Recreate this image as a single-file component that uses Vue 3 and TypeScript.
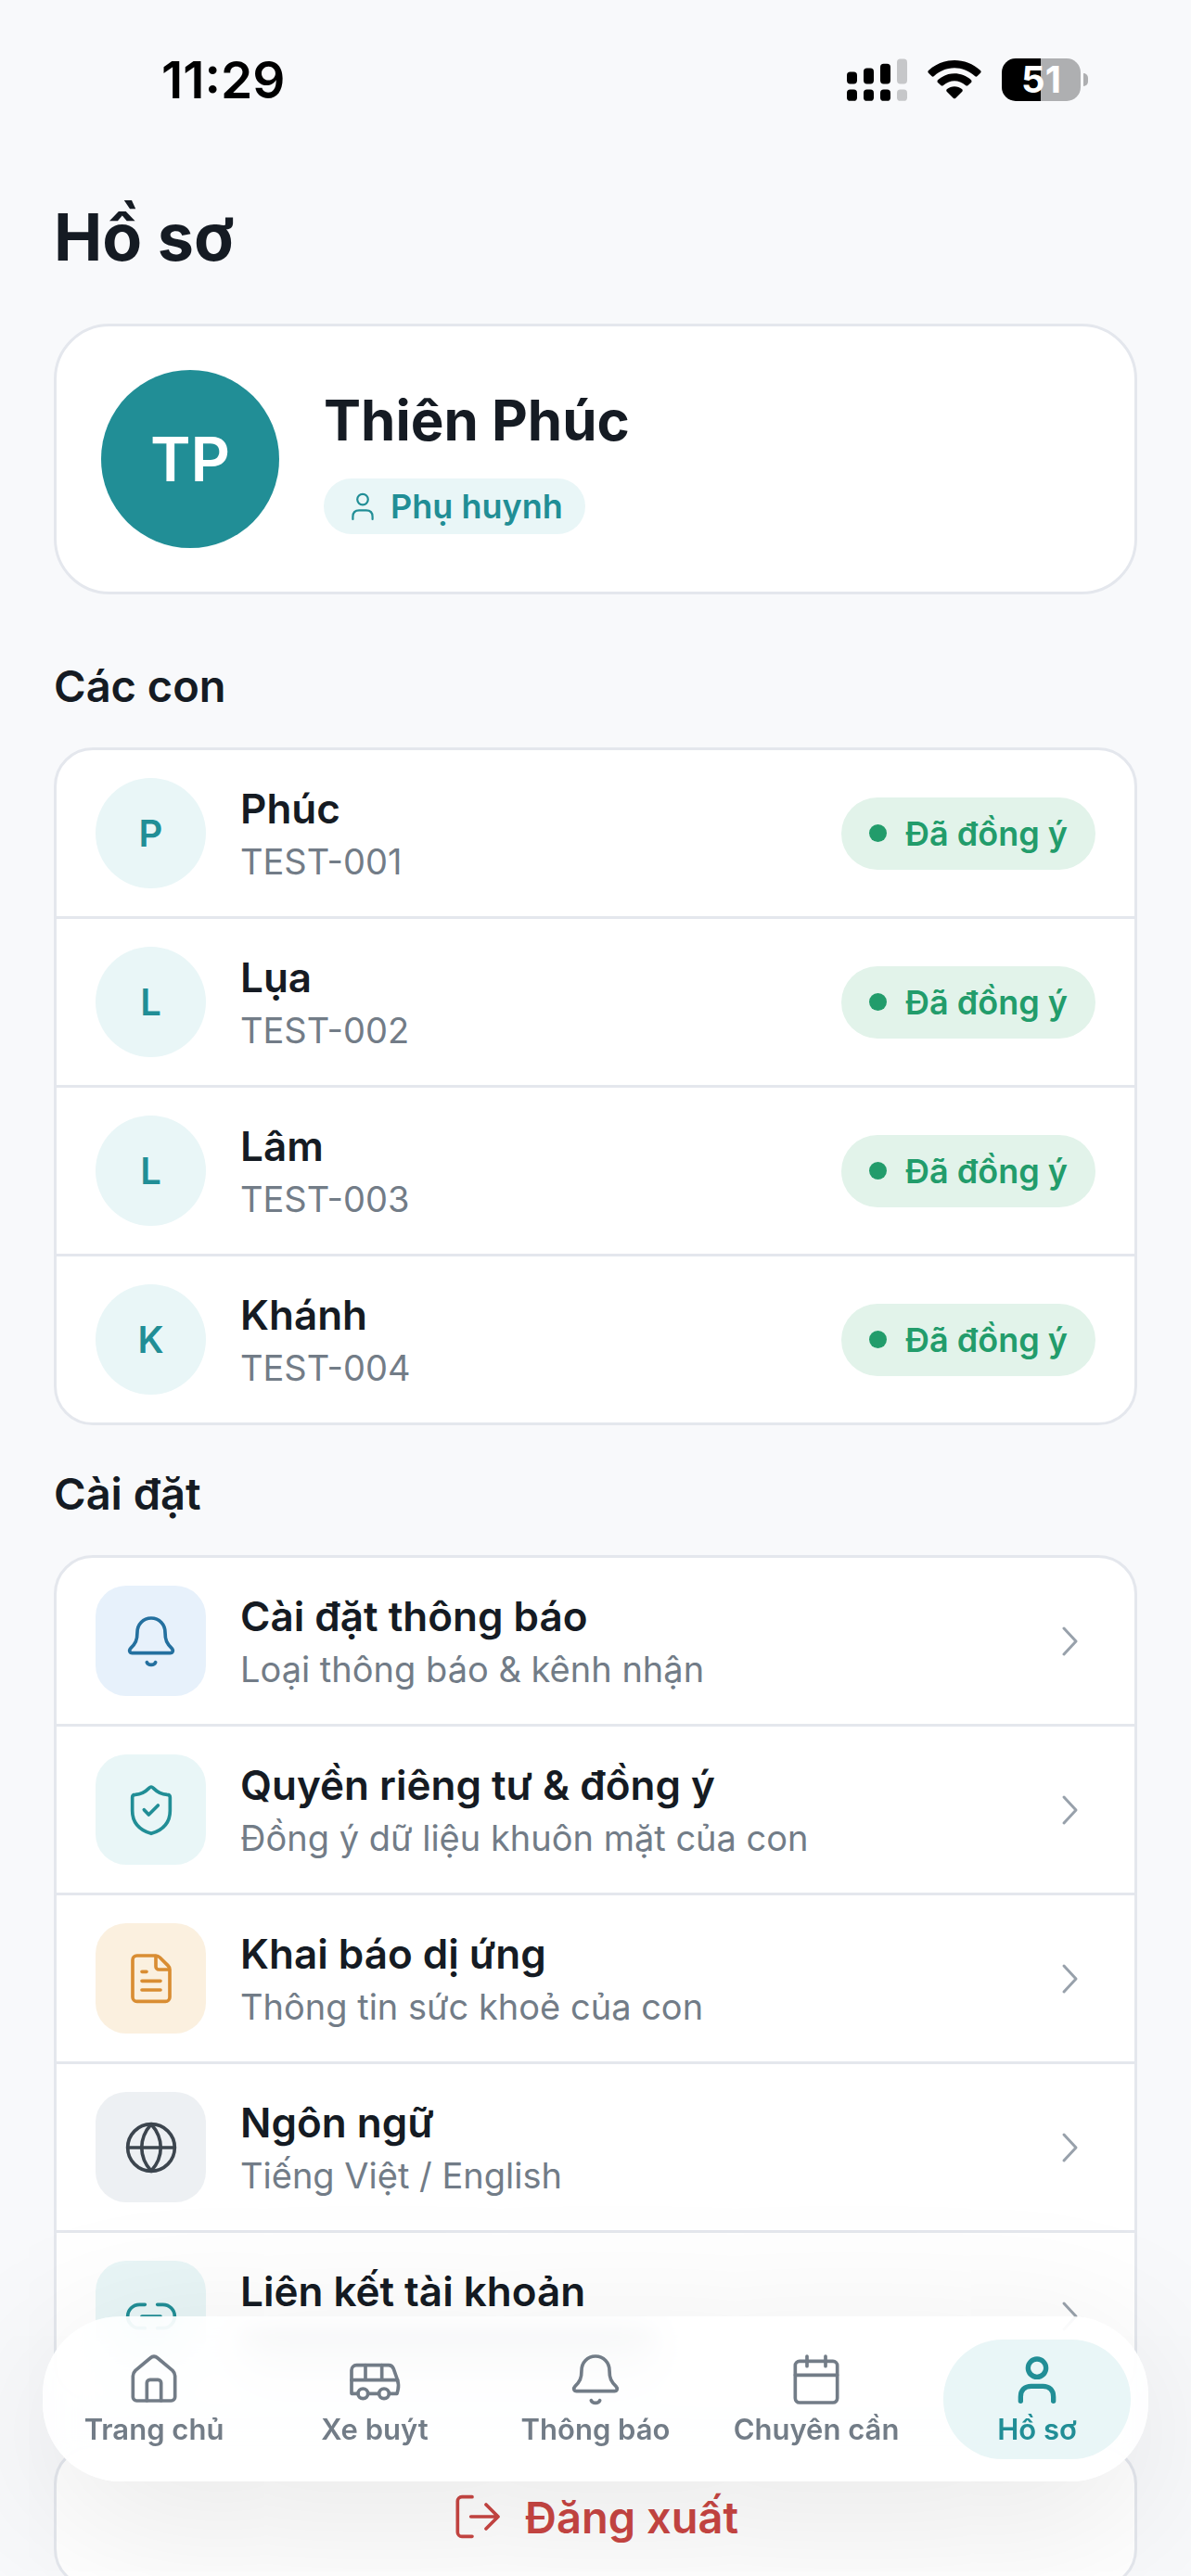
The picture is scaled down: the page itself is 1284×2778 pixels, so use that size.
<script setup lang="ts">
interface Child {
  name: string
  code: string
}

interface Setting {
  title: string
  detail: string
  tone: string
  paths: string[]
}

interface Tab {
  label: string
  active: boolean
  paths: string[]
}

const bell = [
  'M90 15C64 15 45 35 45 61C45 87 39 98 24 112C17 119 20 128 29 128H151C160 128 163 119 156 112C141 98 135 87 135 61C135 35 116 15 90 15Z',
  'M76 158C81 169 99 169 104 158',
]

const person = [
  'M119 53A29 29 0 1 1 61 53A29 29 0 1 1 119 53Z',
  'M37 160V146C37 124 51 112 71 112H109C129 112 143 124 143 146V160',
]

const children: Child[] = [
  { name: 'Phúc', code: 'TEST-001' },
  { name: 'Lụa', code: 'TEST-002' },
  { name: 'Lâm', code: 'TEST-003' },
  { name: 'Khánh', code: 'TEST-004' },
]

const settings: Setting[] = [
  { title: 'Cài đặt thông báo', detail: 'Loại thông báo & kênh nhận', tone: 'blue', paths: bell },
  {
    title: 'Quyền riêng tư & đồng ý',
    detail: 'Đồng ý dữ liệu khuôn mặt của con',
    tone: 'teal',
    paths: [
      'M90 15C93 15 95 17 97 19C109 31 124 39 141 40C147 40 151 43 151 49V92C151 132 126 155 90 166C54 155 29 132 29 92V49C29 43 33 40 39 40C56 39 71 31 83 19C85 17 87 15 90 15Z',
      'M67 89L82 105L112 75',
    ],
  },
  {
    title: 'Khai báo dị ứng',
    detail: 'Thông tin sức khoẻ của con',
    tone: 'orange',
    paths: [
      'M44 15H105C110 15 114 17 118 21L144 47C148 51 150 55 150 60V149A14 14 0 0 1 136 163H44A14 14 0 0 1 30 149V29A14 14 0 0 1 44 15Z',
      'M105 17V50A10 10 0 0 0 115 60H148',
      'M60 67H75M60 97H120M60 126H120',
    ],
  },
  {
    title: 'Ngôn ngữ',
    detail: 'Tiếng Việt / English',
    tone: 'grey',
    paths: [
      'M166 90A76 76 0 1 1 14 90A76 76 0 1 1 166 90Z',
      'M14 90H166',
      'M90 14C49 60 49 120 90 166C131 120 131 60 90 14Z',
    ],
  },
  {
    title: 'Liên kết tài khoản',
    detail: '',
    tone: 'teal',
    paths: [
      'M70 52H52A38 38 0 0 0 52 128H70',
      'M110 52H128A38 38 0 0 1 128 128H110',
      'M60 90H120',
    ],
  },
]

const tabs: Tab[] = [
  {
    label: 'Trang chủ',
    active: false,
    paths: [
      'M22 79C22 71 24 67 30 61L78 21C86 14 94 14 102 21L150 61C156 67 158 71 158 79V147A12 12 0 0 1 146 159H34A12 12 0 0 1 22 147Z',
      'M67 159V101A10 10 0 0 1 77 91H103A10 10 0 0 1 113 101V159',
    ],
  },
  {
    label: 'Xe buýt',
    active: false,
    paths: [
      'M36 136H15V60A16 16 0 0 1 31 44H135C143 44 148 48 151 56L163 90C168 105 168 112 165 124L162 136H137M68 136H103',
      'M15 92H164M60 44V92M113 44V92',
      'M68 136A16 16 0 1 1 36 136A16 16 0 1 1 68 136ZM136 136A16 16 0 1 1 104 136A16 16 0 1 1 136 136Z',
    ],
  },
  { label: 'Thông báo', active: false, paths: bell },
  {
    label: 'Chuyên cần',
    active: false,
    paths: [
      'M36 31H144A14 14 0 0 1 158 45V151A14 14 0 0 1 144 165H36A14 14 0 0 1 22 151V45A14 14 0 0 1 36 31Z',
      'M22 76H158M60 15V47M120 15V47',
    ],
  },
  { label: 'Hồ sơ', active: true, paths: person },
]
</script>

<template>
  <div class="screen">
    <header class="status">
      <span class="time">11:29</span>
      <div class="indicators">
        <svg class="signal" viewBox="0 0 195 137" aria-hidden="true">
          <rect x="0" y="43" width="33" height="39" rx="11" />
          <rect x="54" y="31" width="33" height="51" rx="11" />
          <rect x="108" y="17" width="33" height="65" rx="11" />
          <rect class="dim" x="162" y="1" width="33" height="81" rx="11" />
          <rect x="0" y="100" width="33" height="37" rx="11" />
          <rect x="54" y="100" width="33" height="37" rx="11" />
          <rect x="108" y="100" width="33" height="37" rx="11" />
          <rect class="dim" x="162" y="100" width="33" height="37" rx="11" />
        </svg>
        <svg class="wifi" viewBox="0 0 174 126" aria-hidden="true">
          <path d="M3 33C50-11 124-11 171 33Q175 37 171 41L161 51Q157 55 153 51C114 16 60 16 21 51Q17 55 13 51L3 41Q-1 37 3 33Z" />
          <path d="M33 64C64 36 110 36 141 64Q144 68 141 72L131 81Q127 84 123 81C101 62 73 62 51 81Q47 84 43 81L33 72Q30 68 33 64Z" />
          <path d="M62 94C77 82 97 82 112 94Q115 98 112 101L91 122Q87 126 83 122L62 101Q59 98 62 94Z" />
        </svg>
        <div class="battery">
          <span class="charge">51</span>
          <span class="cap"></span>
        </div>
      </div>
    </header>

    <main class="content">
      <h1>Hồ sơ</h1>

      <section class="card profile">
        <div class="portrait">TP</div>
        <div class="identity">
          <h2 class="name">Thiên Phúc</h2>
          <span class="role">
            <svg class="role-icon line" viewBox="0 0 180 180" aria-hidden="true">
              <path v-for="d in person" :key="d" :d="d" />
            </svg>
            Phụ huynh
          </span>
        </div>
      </section>

      <h2 class="section first">Các con</h2>
      <ul class="card list">
        <li v-for="child in children" :key="child.code" class="row">
          <span class="avatar">{{ child.name.charAt(0) }}</span>
          <div class="texts">
            <span class="title">{{ child.name }}</span>
            <span class="detail">{{ child.code }}</span>
          </div>
          <span class="badge"><i class="dot"></i>Đã đồng ý</span>
        </li>
      </ul>

      <h2 class="section">Cài đặt</h2>
      <ul class="card list">
        <li v-for="item in settings" :key="item.title">
          <button type="button" class="row">
            <span class="tile" :class="item.tone">
              <svg class="icon line" viewBox="0 0 180 180" aria-hidden="true">
                <path v-for="d in item.paths" :key="d" :d="d" />
              </svg>
            </span>
            <span class="texts">
              <span class="title">{{ item.title }}</span>
              <span v-if="item.detail" class="detail">{{ item.detail }}</span>
              <span v-else class="detail pending"><i class="pending-bar"></i></span>
            </span>
            <svg class="chevron" viewBox="0 0 54 54" aria-hidden="true">
              <path d="M20 13L33 27L20 41" />
            </svg>
          </button>
        </li>
      </ul>

      <button type="button" class="card logout">
        <svg class="logout-icon line" viewBox="0 0 162 162" aria-hidden="true">
          <path d="M63 17H30A14 14 0 0 0 16 31V131A14 14 0 0 0 30 145H63" />
          <path d="M59 81H147M108 42L147 81L108 120" />
        </svg>
        Đăng xuất
      </button>
    </main>

    <nav class="tabs">
      <a v-for="tab in tabs" :key="tab.label" href="#" class="tab" :class="{ active: tab.active }">
        <svg class="icon line" viewBox="0 0 180 180" aria-hidden="true">
          <path v-for="d in tab.paths" :key="d" :d="d" />
        </svg>
        <span>{{ tab.label }}</span>
      </a>
    </nav>
  </div>
</template>

<style>
body {
  margin: 0;
  background: #f8f9fb;
}
</style>

<style scoped>
.screen {
  position: relative;
  height: 100vh;
  overflow: hidden;
  background: #f8f9fb;
  color: #151b23;
  font-family: Inter, 'Noto Sans', sans-serif;
}

button {
  border: 0;
  background: none;
  color: inherit;
  font: inherit;
}

.status {
  display: flex;
  align-items: center;
  justify-content: space-between;
  height: 172px;
  padding: 0 111px 0 174px;
  box-sizing: border-box;
  color: #000;
}

.time {
  font-size: 55px;
  font-weight: 600;
}

.indicators {
  display: flex;
  align-items: center;
  gap: 22px;
}

.signal {
  width: 65px;
  height: 46px;
}

.dim {
  fill: #c6c7c9;
}

.wifi {
  width: 58px;
  height: 42px;
}

.battery {
  display: flex;
  align-items: center;
  gap: 3px;
}

.charge {
  width: 85px;
  border-radius: 15px;
  background: linear-gradient(90deg, #000 50%, #aeafb1 50%);
  color: #fff;
  font-size: 40px;
  font-weight: 700;
  line-height: 46px;
  text-align: center;
}

.cap {
  width: 5px;
  height: 14px;
  border-radius: 0 8px 8px 0;
  background: #aeafb1;
}

.content {
  padding: 36px 58px 0;
}

h1,
h2,
ul {
  margin: 0;
  padding: 0;
}

h1 {
  margin-bottom: 45px;
  font-size: 70px;
  font-weight: 700;
  line-height: 96px;
}

.card {
  box-sizing: border-box;
  width: 100%;
  border: 3px solid #e4e7ed;
  border-radius: 42px;
  background: #fff;
}

.profile {
  display: flex;
  align-items: center;
  gap: 48px;
  padding: 47px 48px;
  border-radius: 60px;
}

.portrait {
  display: flex;
  align-items: center;
  justify-content: center;
  width: 192px;
  height: 192px;
  border-radius: 50%;
  background: #218e96;
  color: #fff;
  font-size: 66px;
  font-weight: 600;
}

.identity {
  display: flex;
  flex-direction: column;
  align-items: flex-start;
  gap: 24px;
}

.name {
  font-size: 60px;
  font-weight: 700;
  line-height: 78px;
}

.role {
  display: flex;
  align-items: center;
  gap: 12px;
  padding: 0 24px;
  border-radius: 30px;
  background: #e9f6f7;
  color: #218e96;
  font-size: 36px;
  font-weight: 600;
  line-height: 60px;
}

.role-icon {
  width: 36px;
  height: 36px;
}

.line {
  flex: none;
  fill: none;
  stroke: currentColor;
  stroke-width: 11;
  stroke-linecap: round;
  stroke-linejoin: round;
}

.section {
  margin: 44px 0 36px;
  font-size: 47px;
  font-weight: 600;
  line-height: 60px;
}

.section.first {
  margin-top: 69px;
}

.list {
  overflow: hidden;
  list-style: none;
}

.list li + li {
  border-top: 3px solid #e4e7ed;
}

.row {
  display: flex;
  align-items: center;
  gap: 37px;
  box-sizing: border-box;
  width: 100%;
  padding: 30px 42px;
  text-align: left;
}

.avatar,
.tile {
  display: flex;
  flex: none;
  align-items: center;
  justify-content: center;
  width: 119px;
  height: 119px;
}

.avatar {
  border-radius: 50%;
  background: #e9f6f7;
  color: #218e96;
  font-size: 40px;
  font-weight: 600;
}

.tile {
  border-radius: 33px;
}

.blue {
  background: #e7f1fb;
  color: #24709f;
}

.teal {
  background: #e9f6f7;
  color: #218e96;
}

.orange {
  background: #fbf0df;
  color: #d98d33;
}

.grey {
  background: #edf0f3;
  color: #3c454e;
}

.icon {
  width: 60px;
  height: 60px;
}

.texts {
  display: flex;
  flex: 1;
  flex-direction: column;
}

.title {
  font-size: 44px;
  font-weight: 600;
  line-height: 60px;
}

.detail {
  color: #727c87;
  font-size: 38px;
  line-height: 54px;
}

.pending {
  display: flex;
  align-items: center;
  height: 54px;
}

.pending-bar {
  width: 450px;
  height: 24px;
  border-radius: 12px;
  background: #a4abb3;
  filter: blur(8px);
}

.badge {
  display: flex;
  align-items: center;
  gap: 20px;
  padding: 0 30px;
  border-radius: 39px;
  background: #e2f3ea;
  color: #229c6b;
  font-size: 36px;
  font-weight: 600;
  line-height: 78px;
}

.dot {
  width: 19px;
  height: 19px;
  border-radius: 50%;
  background: currentColor;
}

.chevron {
  flex: none;
  width: 54px;
  height: 54px;
  fill: none;
  stroke: #98a1ab;
  stroke-width: 3;
  stroke-linecap: round;
  stroke-linejoin: round;
}

.logout {
  display: flex;
  align-items: center;
  justify-content: center;
  gap: 24px;
  height: 154px;
  margin-top: 47px;
  border: 3px solid #e4e7ed;
  background: #fff;
  color: #c94643;
  font-size: 47px;
  font-weight: 600;
}

.logout-icon {
  width: 54px;
  height: 54px;
}

.tabs {
  position: absolute;
  right: 46px;
  bottom: 102px;
  left: 46px;
  display: flex;
  gap: 36px;
  padding: 25px 19px 24px;
  border-radius: 84px;
  background: rgba(255, 255, 255, 0.85);
  box-shadow: 0 36px 180px rgba(0, 0, 0, 0.105);
  backdrop-filter: blur(24px);
}

.tab {
  display: flex;
  flex: 1 1 0;
  flex-direction: column;
  align-items: center;
  gap: 6px;
  min-width: 0;
  padding: 13px 0 14px;
  border-radius: 64px;
  color: #727c87;
  font-size: 31px;
  font-weight: 600;
  line-height: 36px;
  text-decoration: none;
  white-space: nowrap;
}

.tab.active {
  background: #e9f6f7;
  color: #218e96;
}

.tab.active .icon {
  stroke-width: 16;
}
</style>
